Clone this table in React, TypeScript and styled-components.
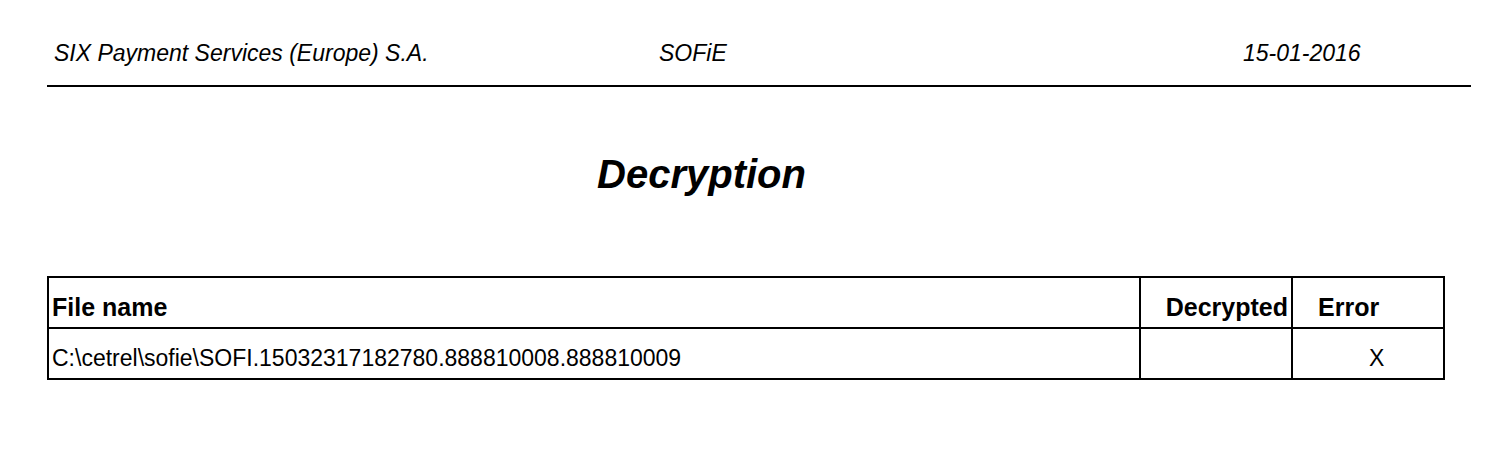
import React from 'react'
import styled, { createGlobalStyle } from 'styled-components'

const GlobalStyle = createGlobalStyle`
  html, body {
    margin: 0;
    padding: 0;
    background: #fff;
  }
  body {
    font-family: 'Liberation Sans', Arial, sans-serif;
    color: #000;
  }
`

const Page = styled.div`
  padding: 42px 0 0 47px;
`

const Header = styled.div`
  width: 1424px;
  box-sizing: border-box;
  display: grid;
  grid-template-columns: 605px 584px 1fr;
  padding: 0 0 20px 7px;
  border-bottom: 2px solid #000;
  font-size: 23px;
  line-height: 23px;
  font-style: italic;
`

const Title = styled.h1`
  margin: 67px 0 0;
  padding-left: 550px;
  font-size: 40px;
  line-height: 40px;
  font-weight: bold;
  font-style: italic;
`

const Grid = styled.div`
  margin-top: 82px;
  display: grid;
  grid-template-columns: 1092px 152px 152px;
  width: max-content;
  border-top: 2px solid #000;
  border-left: 2px solid #000;
`

const Cell = styled.div<{ $head?: boolean; $align?: 'left' | 'right'; $pad?: number }>`
  box-sizing: border-box;
  border-right: 2px solid #000;
  border-bottom: 2px solid #000;
  height: 51px;
  padding-top: ${p => (p.$head ? 17 : 18)}px;
  padding-left: ${p => (p.$align === 'right' ? 0 : p.$pad ?? 3)}px;
  padding-right: ${p => (p.$align === 'right' ? 3 : 0)}px;
  text-align: ${p => p.$align || 'left'};
  font-size: ${p => (p.$head ? 25 : 23)}px;
  line-height: ${p => (p.$head ? 25 : 23)}px;
  font-weight: ${p => (p.$head ? 'bold' : 'normal')};
  white-space: nowrap;
`

const files = [
  { name: 'C:\\cetrel\\sofie\\SOFI.15032317182780.888810008.888810009', decrypted: '', error: 'X' }
]

export default function App() {
  return (
    <>
      <GlobalStyle />
      <Page>
        <Header>
          <span>SIX Payment Services (Europe) S.A.</span>
          <span>SOFiE</span>
          <span>15-01-2016</span>
        </Header>
        <Title>Decryption</Title>
        <Grid>
          <Cell $head>File name</Cell>
          <Cell $head $align="right">Decrypted</Cell>
          <Cell $head $pad={25}>Error</Cell>
          {files.map(f => (
            <React.Fragment key={f.name}>
              <Cell>{f.name}</Cell>
              <Cell>{f.decrypted}</Cell>
              <Cell $pad={76}>{f.error}</Cell>
            </React.Fragment>
          ))}
        </Grid>
      </Page>
    </>
  )
}
